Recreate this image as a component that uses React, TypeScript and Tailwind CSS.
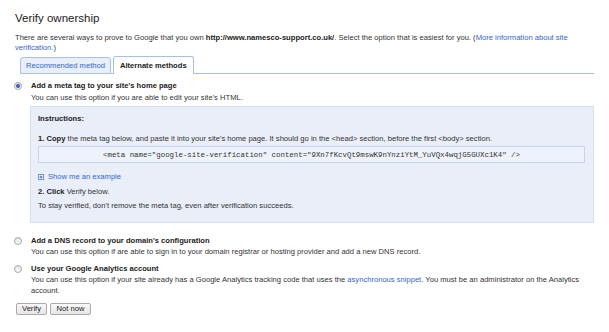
import React from 'react';

const Radio = ({ checked = false }: { checked?: boolean }) => (
  <span className="-ml-[1px] mt-[2px] flex h-[8px] w-[8px] shrink-0 items-center justify-center rounded-full border border-[#a8a8a8] bg-gradient-to-b from-[#e4e4e4] to-[#fafafa]">
    {checked && <span className="h-[4px] w-[4px] rounded-full bg-[#2f5fb8]" />}
  </span>
);

const Option = ({
  checked,
  title,
  children,
}: {
  checked?: boolean;
  title: string;
  children: React.ReactNode;
}) => (
  <div className="flex items-start gap-[9px]">
    <Radio checked={checked} />
    <div className="flex-1">
      <div className="font-bold leading-[11px] text-[#222]">{title}</div>
      <div className="leading-[11px]">{children}</div>
    </div>
  </div>
);

export default function App() {
  return (
    <div
      className="min-h-screen w-[609px] bg-white px-[15px] pt-[11px] text-[7.6px] text-[#333]"
      style={{ fontFamily: '"Liberation Sans", Arial, sans-serif' }}
    >
      <h1 className="text-[11.5px] leading-[14px] text-[#222]">Verify ownership</h1>

      {/* intro */}
      <p className="mt-[8px] w-[579px] leading-[10px]">
        There are several ways to prove to Google that you own{' '}
        <b className="text-[#222]">http://www.namesco-support.co.uk/</b>. Select the option that is easiest for
        you. (<a className="text-[#3366cc]">More information about site</a>{' '}
        <a className="text-[#3366cc]">verification.</a>)
      </p>

      {/* tabs */}
      <div className="mt-[3px] flex w-[579px] items-end pl-[5px]">
        <div className="flex h-[17px] items-center rounded-t-[3px] border border-[#a9bfe9] bg-[#e8eefa] px-[5px] text-[#3366cc]">
          Recommended method
        </div>
        <div className="h-[1px] w-[2px] border-b border-[#a9bfe9]" />
        <div className="flex h-[18px] items-center rounded-t-[3px] border border-b-0 border-[#a9bfe9] bg-white px-[6px] font-bold text-[#222]">
          Alternate methods
        </div>
        <div className="flex-1 border-b border-[#a9bfe9]" />
      </div>

      <div className="mt-[6px] w-[579px]">
        <Option checked title="Add a meta tag to your site's home page">
          <span className="block pt-[1px]">You can use this option if you are able to edit your site's HTML.</span>
        </Option>

        {/* instructions box */}
        <div className="ml-[15px] mt-[3px] border border-[#d3ddf3] bg-[#e9eef9] pb-[10px] pl-[7px] pr-[8px] pt-[6px] leading-[12px]">
          <div className="font-bold text-[#222]">Instructions:</div>
          <div className="mt-[8px]">
            <b className="text-[#222]">1. Copy</b> the meta tag below, and paste it into your site's home page. It
            should go in the &lt;head&gt; section, before the first &lt;body&gt; section.
          </div>
          <div
            className="mt-[1px] flex h-[17px] items-center justify-center border border-[#c6d4ef] bg-[#eef2fb] text-[7.4px] text-[#333]"
            style={{ fontFamily: '"Liberation Mono", "Courier New", monospace' }}
          >
            &lt;meta name="google-site-verification" content="9Xn7fKcvQt9mswK9nYnziYtM_YuVQx4wqjG5GUXc1K4" /&gt;
          </div>
          <div className="mt-[8px] flex items-center gap-[4px] text-[#3366cc]">
            <span className="flex h-[6px] w-[6px] items-center justify-center border border-[#6f8fd0] bg-white">
              <svg viewBox="0 0 4 4" className="h-[4px] w-[4px]">
                <path d="M0.5 2H3.5M2 0.5V3.5" stroke="#3366cc" strokeWidth="1" />
              </svg>
            </span>
            Show me an example
          </div>
          <div className="mt-[3px]">
            <b className="text-[#222]">2. Click</b> Verify below.
          </div>
          <div className="mt-[2px]">To stay verified, don't remove the meta tag, even after verification succeeds.</div>
        </div>

        <div className="mt-[12px]">
          <Option title="Add a DNS record to your domain's configuration">
            You can use this option if are able to sign in to your domain registrar or hosting provider and add a new
            DNS record.
          </Option>
        </div>

        <div className="mt-[6px]">
          <Option title="Use your Google Analytics account">
            You can use this option if your site already has a Google Analytics tracking code that uses the{' '}
            <a className="text-[#3366cc]">asynchronous snippet</a>. You must be an administrator on the Analytics
            account.
          </Option>
        </div>

        <div className="mt-[7px] flex gap-[3px] pl-[1px]">
          <button className="flex h-[12px] w-[31px] items-center justify-center rounded-[2px] border border-[#aaa] bg-gradient-to-b from-[#f8f8f8] to-[#e6e6e6] text-[7.6px] text-[#222]">
            Verify
          </button>
          <button className="flex h-[12px] w-[41px] items-center justify-center rounded-[2px] border border-[#aaa] bg-gradient-to-b from-[#f8f8f8] to-[#e6e6e6] text-[7.6px] text-[#222]">
            Not now
          </button>
        </div>
      </div>
    </div>
  );
}
